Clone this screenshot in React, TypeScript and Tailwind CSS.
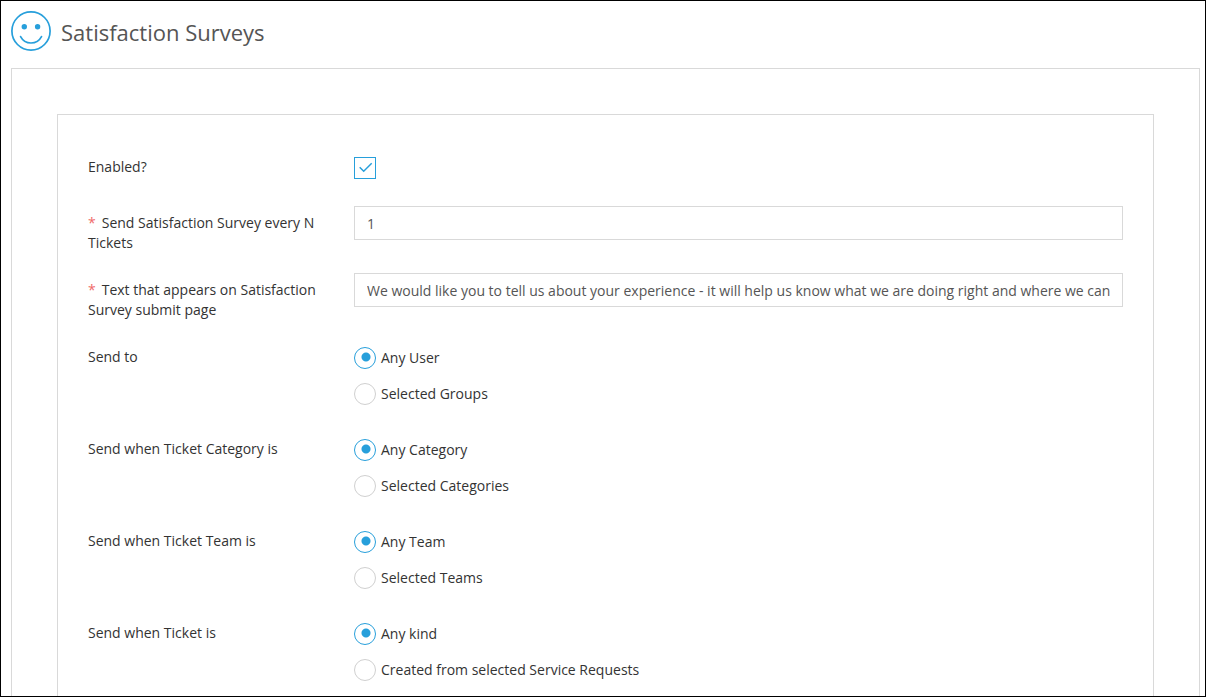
import React, { useState } from 'react';

interface ChoiceRow {
  name: string;
  label: string;
  options: string[];
}

const CHOICE_ROWS: ChoiceRow[] = [
  { name: 'sendTo', label: 'Send to', options: ['Any User', 'Selected Groups'] },
  {
    name: 'category',
    label: 'Send when Ticket Category is',
    options: ['Any Category', 'Selected Categories'],
  },
  { name: 'team', label: 'Send when Ticket Team is', options: ['Any Team', 'Selected Teams'] },
  {
    name: 'kind',
    label: 'Send when Ticket is',
    options: ['Any kind', 'Created from selected Service Requests'],
  },
];

const ROW_CLASS = 'flex gap-[30px]';
const LABEL_CLASS = 'w-[236px] shrink-0 pt-[7px]';

const SmileIcon: React.FC = () => (
  <svg
    className="h-10 w-10 shrink-0"
    viewBox="0 0 40 40"
    fill="none"
    stroke="#279fdb"
    strokeWidth="1.7"
    strokeLinecap="round"
    aria-hidden="true"
  >
    <circle cx="20" cy="20" r="19.1" />
    <circle cx="13.3" cy="15.7" r="2.7" fill="#279fdb" stroke="none" />
    <circle cx="26.6" cy="15.7" r="2.7" fill="#279fdb" stroke="none" />
    <path d="M9.600 25.600C11.800 29.800 15.600 32 20 32s8.300-2.200 10.500-6.400" />
  </svg>
);

interface TextRowProps {
  id: string;
  label: string;
  defaultValue: string;
}

const TextRow: React.FC<TextRowProps> = ({ id, label, defaultValue }) => (
  <div className={ROW_CLASS}>
    <label htmlFor={id} className={LABEL_CLASS}>
      <span className="mr-1.5 text-[#f06a6a]">*</span>
      {label}
    </label>
    <input
      id={id}
      type="text"
      required
      defaultValue={defaultValue}
      className="h-[34px] min-w-0 flex-1 border border-[#d9d9d9] bg-white px-3 text-[#555555] outline-none focus:border-[#279fdb]"
    />
  </div>
);

const RadioRow: React.FC<{ row: ChoiceRow }> = ({ row }) => {
  const [selected, setSelected] = useState(0);

  return (
    <div className={ROW_CLASS} role="radiogroup" aria-labelledby={`${row.name}-label`}>
      <div id={`${row.name}-label`} className={LABEL_CLASS}>
        {row.label}
      </div>
      <div className="flex flex-1 flex-col items-start gap-[14px] py-[7px]">
        {row.options.map((option, idx) => (
          <label key={option} className="flex h-[22px] items-center gap-[5px]">
            <input
              type="radio"
              name={row.name}
              checked={selected === idx}
              onChange={() => setSelected(idx)}
              className="h-[22px] w-[22px] shrink-0 appearance-none rounded-full border border-[#d0d0d0] bg-white checked:border-[#279fdb] checked:bg-[radial-gradient(circle_at_11px_9px,#279fdb_4px,transparent_5px)]"
            />
            {option}
          </label>
        ))}
      </div>
    </div>
  );
};

export default function App() {
  const [enabled, setEnabled] = useState(true);

  return (
    <div className="h-screen overflow-hidden border border-black bg-white pr-[5px] pl-[10px] font-['Open_Sans',sans-serif] text-sm leading-5 text-[#333333]">
      <header className="flex h-[67px] items-start gap-[10px] pt-[10px]">
        <SmileIcon />
        <h1 className="pt-[5px] text-[22px] leading-8 text-[#555555]">Satisfaction Surveys</h1>
      </header>

      <main className="min-h-full border border-[#d9d9d9] p-[45px]">
        <form className="flex flex-col gap-5 border border-[#d9d9d9] px-[30px] py-[35px]">
          <div className={ROW_CLASS}>
            <label htmlFor="enabled" className={LABEL_CLASS}>
              Enabled?
            </label>
            <div className="py-[7px]">
              <div className="relative h-[22px] w-[22px]">
                <input
                  id="enabled"
                  type="checkbox"
                  checked={enabled}
                  onChange={(e) => setEnabled(e.target.checked)}
                  className="block h-[22px] w-[22px] appearance-none border border-[#d0d0d0] bg-white checked:border-[#279fdb]"
                />
                {enabled && (
                  <svg
                    className="pointer-events-none absolute inset-0"
                    viewBox="0 0 22 22"
                    fill="none"
                    stroke="#279fdb"
                    strokeWidth="1.5"
                    aria-hidden="true"
                  >
                    <path d="M5.700 10.300L9.700 14.200L17.700 6.300" />
                  </svg>
                )}
              </div>
            </div>
          </div>

          <TextRow id="interval" label="Send Satisfaction Survey every N Tickets" defaultValue="1" />
          <TextRow
            id="submitText"
            label="Text that appears on Satisfaction Survey submit page"
            defaultValue="We would like you to tell us about your experience - it will help us know what we are doing right and where we can improve."
          />

          {CHOICE_ROWS.map((row) => (
            <RadioRow key={row.name} row={row} />
          ))}
        </form>
      </main>
    </div>
  );
}
